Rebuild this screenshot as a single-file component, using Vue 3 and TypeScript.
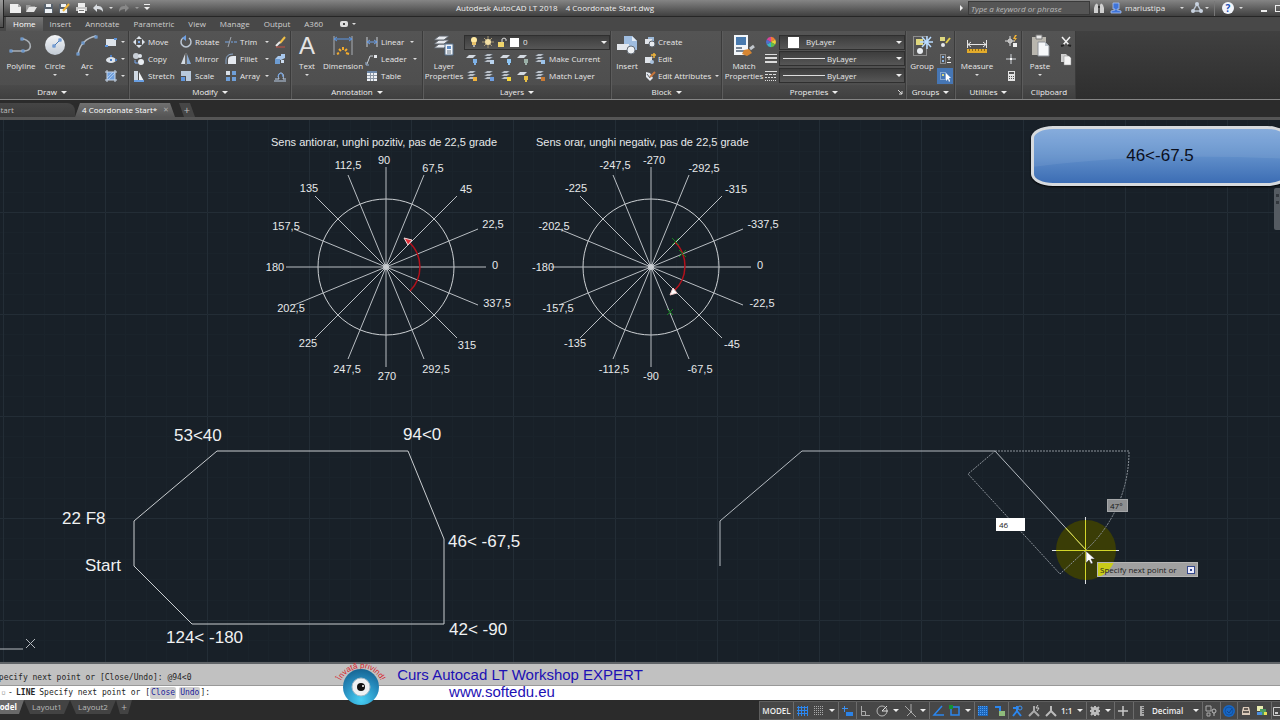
<script setup lang="ts">
import { ref } from 'vue'

interface Tool { icon: string; label: string; menu?: boolean }
interface Label { t: string; x: number; y: number }
interface StatusItem { icon?: string; text?: string; w: number; menu?: boolean; end?: boolean; name: string }

const tabs = ['Home', 'Insert', 'Annotate', 'Parametric', 'View', 'Manage', 'Output', 'A360']
const activeTab = ref('Home')
const layer = ref('0')
const color = ref('ByLayer')
const weight = ref('ByLayer')
const linetype = ref('ByLayer')
const search = ref('')
const command = ref('')
const distance = ref('46')
const angle = ref('47°')

const quick = [
  { icon: 'new', label: 'New', w: 16 }, { icon: 'open', label: 'Open', w: 17 },
  { icon: 'save', label: 'Save', w: 16 }, { icon: 'saveas', label: 'Save As', w: 17 },
  { icon: 'print', label: 'Plot', w: 17 }, { icon: 'undo', label: 'Undo', w: 16 },
]

const modify: Tool[] = [
  { icon: 'move', label: 'Move' }, { icon: 'rotate', label: 'Rotate' }, { icon: 'trim', label: 'Trim', menu: true }, { icon: 'erase', label: '' },
  { icon: 'copy', label: 'Copy' }, { icon: 'mirror', label: 'Mirror' }, { icon: 'fillet', label: 'Fillet', menu: true }, { icon: 'explode', label: '' },
  { icon: 'stretch', label: 'Stretch' }, { icon: 'scale', label: 'Scale' }, { icon: 'array', label: 'Array', menu: true }, { icon: 'offset', label: '' },
]
const annotation: Tool[] = [
  { icon: 'linear', label: 'Linear', menu: true }, { icon: 'leader', label: 'Leader', menu: true }, { icon: 'table', label: 'Table' },
]
const block: Tool[] = [
  { icon: 'create', label: 'Create' }, { icon: 'edit', label: 'Edit' }, { icon: 'attr', label: 'Edit Attributes', menu: true },
]
const layerRows = [
  {
    label: 'Make Current',
    marks: [
      { c: '#7fb2e8', i: 'sheet' }, { c: '#b9d3ee', i: 'stack' }, { c: '#8ec6f5', i: 'sheet' }, { c: '#9bb0a8', i: 'sheet' }, { c: '#9cc3ea', i: 'stack' },
    ],
  },
  {
    label: 'Match Layer',
    marks: [
      { c: '#f0b23c', i: 'stack' }, { c: '#6f9ee0', i: 'stack' }, { c: '#f4d43c', i: 'stack' }, { c: '#e8bf45', i: 'sheet' }, { c: '#c87a34', i: 'stack' },
    ],
  },
]

const spokes = Array.from({ length: 16 }, (_, i) => {
  const a = (i * Math.PI) / 8
  return { x: Math.round(Math.cos(a) * 100), y: Math.round(Math.sin(a) * 100) }
})
const wheelLabels: Label[] = [
  { t: '90', x: 384, y: 164 }, { t: '112,5', x: 348, y: 169 }, { t: '67,5', x: 433, y: 172 }, { t: '135', x: 309, y: 192 },
  { t: '45', x: 466, y: 193 }, { t: '157,5', x: 286, y: 230 }, { t: '22,5', x: 493, y: 228 }, { t: '180', x: 275, y: 271 },
  { t: '0', x: 495, y: 269 }, { t: '202,5', x: 291, y: 312 }, { t: '337,5', x: 497, y: 307 }, { t: '225', x: 308, y: 347 },
  { t: '315', x: 467, y: 349 }, { t: '247,5', x: 347, y: 373 }, { t: '292,5', x: 436, y: 373 }, { t: '270', x: 387, y: 380 },
  { t: '-270', x: 654, y: 164 }, { t: '-247,5', x: 615, y: 169 }, { t: '-292,5', x: 704, y: 172 }, { t: '-225', x: 576, y: 192 },
  { t: '-315', x: 736, y: 193 }, { t: '-202,5', x: 554, y: 230 }, { t: '-337,5', x: 763, y: 228 }, { t: '-180', x: 543, y: 271 },
  { t: '0', x: 760, y: 269 }, { t: '-157,5', x: 558, y: 312 }, { t: '-22,5', x: 762, y: 307 }, { t: '-135', x: 575, y: 347 },
  { t: '-45', x: 732, y: 348 }, { t: '-112,5', x: 614, y: 373 }, { t: '-67,5', x: 700, y: 373 }, { t: '-90', x: 651, y: 380 },
]
const shapeLabels: Label[] = [
  { t: '53<40', x: 174, y: 441 }, { t: '94<0', x: 403, y: 440 }, { t: '22 F8', x: 62, y: 524 }, { t: 'Start', x: 85, y: 571 },
  { t: '46< -67,5', x: 448, y: 547 }, { t: '42< -90', x: 449, y: 635 }, { t: '124< -180', x: 166, y: 643 },
]

const status: StatusItem[] = [
  { text: 'MODEL', w: 34, end: true, name: 'Model space' },
  { icon: 's-grid', w: 17, name: 'Grid' }, { icon: 's-snap', w: 28, menu: true, end: true, name: 'Snap' },
  { icon: 's-infer', w: 18, end: true, name: 'Dynamic input' },
  { icon: 's-ortho', w: 17, name: 'Ortho' }, { icon: 's-polar', w: 28, menu: true, name: 'Polar tracking' },
  { icon: 's-iso', w: 28, menu: true, end: true, name: 'Isometric drafting' },
  { icon: 's-track', w: 17, name: 'Object snap tracking' }, { icon: 's-osnap', w: 28, menu: true, end: true, name: 'Object snap' },
  { icon: 's-hatch', w: 17, name: 'Transparency' }, { icon: 's-cycle', w: 17, end: true, name: 'Selection cycling' },
  { icon: 's-person', w: 17, name: 'Annotation visibility' }, { icon: 's-person2', w: 17, name: 'Auto scale' },
  { icon: 's-person3', text: '1:1', w: 44, menu: true, end: true, name: 'Annotation scale' },
  { icon: 's-gear', w: 28, menu: true, end: true, name: 'Workspace' },
  { icon: 's-plus', w: 19, end: true, name: 'Annotation monitor' },
  { icon: 's-unit', text: 'Decimal', w: 69, menu: true, end: true, name: 'Units' },
  { icon: 's-props', w: 18, end: true, name: 'Quick properties' },
  { icon: 's-perf', w: 17, end: true, name: 'Graphics performance' },
  { icon: 's-plot', w: 16, name: 'Plot' }, { icon: 's-msg', w: 18, end: true, name: 'Notifications' },
  { icon: 's-clean', w: 8, name: 'Clean screen' },
]
</script>

<template>
  <svg class="defs" aria-hidden="true">
    <defs>
      <linearGradient id="ball" x1="0" y1="0" x2="0" y2="1"><stop offset="0" stop-color="#f4f6f8" /><stop offset="1" stop-color="#c2cad4" /></linearGradient>
      <radialGradient id="eye" cx=".5" cy=".85" r=".9"><stop offset="0" stop-color="#48d0f4" /><stop offset=".6" stop-color="#2589bb" /><stop offset="1" stop-color="#145f8c" /></radialGradient>
    </defs>
    <symbol id="new" viewBox="0 0 16 16"><path d="M3 4h8l3 3v6H3z" fill="#eee" /><path d="M11 4v3h3" fill="#aaa" /></symbol>
    <symbol id="open" viewBox="0 0 16 16"><path d="M3 12V5h4l1 1h4v2" fill="#999" /><path d="M3 12l3-5h8l-3 5z" fill="#e3e3e3" /></symbol>
    <symbol id="save" viewBox="0 0 16 16"><path d="M4 4h9v9H4z" fill="#59636e" /><path d="M6 4h5v3H6zM5 9h7v4H5z" fill="#eef2f6" /></symbol>
    <symbol id="saveas" viewBox="0 0 16 16"><path d="M3 4h9v9H3z" fill="#59636e" /><path d="M5 4h5v3H5zM4 9h7v4H4z" fill="#eef2f6" /><path d="M7 11l6-7" stroke="#eeb43a" stroke-width="2" /></symbol>
    <symbol id="print" viewBox="0 0 16 16"><path d="M5 3h7v4H5z" fill="#eee" /><path d="M3 7h11v4H3z" fill="#c9c9c9" /><path d="M5 9h7v4H5z" fill="#f5f5f5" /><path d="M6 10.500h5" stroke="#777" /></symbol>
    <symbol id="undo" viewBox="0 0 16 16"><path d="M7 4v2c4 0 6 1 6 6-1-2-3-3-6-3v3L3 8z" fill="#d9dde2" /></symbol>
    <symbol id="redo" viewBox="0 0 16 16"><path d="M9 4v2C5 6 3 7 3 12c1-2 3-3 6-3v3l4-4z" fill="#888" /></symbol>

    <symbol id="polyline" viewBox="0 0 24 24"><path d="M2 17h13c6 0 7-4 6-7s-5-5-8-5" fill="none" stroke="#aab0b6" stroke-width="1.500" /><g fill="#314a6c" stroke="#7fb0ea"><rect x="1" y="16" width="2" height="2" /><rect x="13" y="16" width="2" height="2" /><rect x="12" y="4" width="2" height="2" /></g></symbol>
    <symbol id="circle" viewBox="0 0 24 24"><circle cx="12" cy="11" r="10" fill="url(#ball)" /><path d="M11 12l6-6" stroke="#4b7ab4" /><g fill="#e8eef6" stroke="#4a80c8"><rect x="10" y="11" width="2" height="2" /><rect x="16" y="5" width="2" height="2" /></g></symbol>
    <symbol id="arc" viewBox="0 0 24 24"><path d="M3 21C4 11 11 4 21 2" fill="none" stroke="#b7bcc2" stroke-width="1.500" /><g fill="#314a6c" stroke="#7fb0ea"><rect x="2" y="19" width="2" height="2" /><rect x="7" y="8" width="2" height="2" /><rect x="20" y="2" width="2" height="2" /></g></symbol>
    <symbol id="rect" viewBox="0 0 16 16"><path d="M3 5h10v7H3z" fill="#dde3ea" /><path d="M2 11h3v2H2zM11 4h3v2h-3z" fill="#5c92d8" /></symbol>
    <symbol id="ellipse" viewBox="0 0 16 16"><ellipse cx="8" cy="9" rx="5" ry="3" fill="#dde3ea" /><path d="M7 4h2v2H7zM7 8h2v2H7zM12 8h2v2h-2z" fill="#4f7fc2" /></symbol>
    <symbol id="hatch" viewBox="0 0 16 16"><path d="M4 4h8v8H4z" fill="#6f9fdc" /><path d="M4 10l6-6M5 12l7-7" stroke="#a9c6ec" /><path d="M2 4h12M2 12h12M4 2v12M12 2v12" stroke="#c8d8ec" /></symbol>
    <symbol id="move" viewBox="0 0 16 16"><path d="M8 2l3 3H5zM8 14l3-3H5zM2 8l3-3v6zM14 8l-3-3v6z" fill="#dfe5ec" /><path d="M7 7h2v2H7z" fill="#7da9e8" /></symbol>
    <symbol id="copy" viewBox="0 0 16 16"><circle cx="5" cy="5" r="3" fill="#c8ced6" /><circle cx="9" cy="5" r="2" fill="#dfe5ec" /><circle cx="10" cy="11" r="3" fill="#e9edf2" /><path d="M4 9v3h3" fill="none" stroke="#7aaaf0" /></symbol>
    <symbol id="stretch" viewBox="0 0 16 16"><path d="M3 3h4v10H3z" fill="#cfd8e2" /><path d="M8 4l5 9H8z" fill="#f0f3f6" /><path d="M3 13h10" stroke="#6a9fe2" stroke-width="2" /></symbol>
    <symbol id="rotate" viewBox="0 0 16 16"><path d="M5 4a5 5 0 1 0 6 0" fill="none" stroke="#bcc7d4" stroke-width="1.500" /><path d="M8 1v6L4 4z" fill="#6f9fe0" /></symbol>
    <symbol id="mirror" viewBox="0 0 16 16"><path d="M7 3v10H3z" fill="#d3dae2" /><path d="M9 3v10h4z" fill="#87a9d2" /><path d="M8 2v12" stroke="#888" /></symbol>
    <symbol id="scale" viewBox="0 0 16 16"><path d="M3 3h10v10H8V8H3z" fill="#b8c9dc" /><path d="M3 9h4v4H3z" fill="#5f96de" /></symbol>
    <symbol id="trim" viewBox="0 0 16 16"><path d="M2 8h4M8 8h2M11 8h3" stroke="#78a8e8" /><path d="M8 3L5 13" stroke="#a2a8b0" /></symbol>
    <symbol id="fillet" viewBox="0 0 16 16"><path d="M5 13V9q0-4 5-4h3v8z" fill="#e4e8ee" /><path d="M3 13V9q0-6 7-6" fill="none" stroke="#8aa7ca" /></symbol>
    <symbol id="array" viewBox="0 0 16 16"><path d="M3 3h4v4H3z" fill="#d9e0e8" /><path d="M9 3h4v4H9zM3 9h4v4H3zM9 9h4v4H9z" fill="#6f9fd8" /></symbol>
    <symbol id="erase" viewBox="0 0 16 16"><path d="M13 3L8 9" stroke="#f0bf46" stroke-width="2" /><path d="M8 8L4 12" stroke="#e8e8e8" stroke-width="2" /><path d="M4 13h9" stroke="#c75042" /></symbol>
    <symbol id="explode" viewBox="0 0 16 16"><path d="M3 8l3-3h3v4zM9 3h4v4l-4 2z" fill="#a9c8ec" /><path d="M3 8h5v5H3z" fill="#6d9cd2" /><path d="M9 9h3v3H9z" fill="#cddcee" /></symbol>
    <symbol id="offset" viewBox="0 0 16 16"><path d="M2 13h12M3 11h4c-3-8 7-8 4 0h3" fill="none" stroke="#b9cde6" /><path d="M6 9a2 3 0 0 1 5 0" fill="none" stroke="#6ea4ea" /></symbol>
    <symbol id="dim" viewBox="0 0 24 24"><path d="M3 2v19M21 2v19" stroke="#a9aeb4" /><path d="M3 5h18M6 3L3 5l3 2M18 3l3 2-3 2" fill="none" stroke="#5f98e4" /><path d="M6 20l2-1M8 15l2 2M12 13v3M16 15l-2 2M18 20l-3-1" stroke="#f2ab2d" stroke-width="2" /></symbol>
    <symbol id="linear" viewBox="0 0 16 16"><path d="M3 3v10M13 3v10" stroke="#c9ced4" /><path d="M3 8h10M6 6L3 8l3 2M10 6l3 2-3 2" fill="none" stroke="#6ea0e6" /></symbol>
    <symbol id="leader" viewBox="0 0 16 16"><path d="M3 13l3-8h3" fill="none" stroke="#c9ced4" /><path d="M2 11v3h3" fill="none" stroke="#9bb6d8" /><path d="M10 4h3v3h-3z" fill="#e5e8ec" /></symbol>
    <symbol id="table" viewBox="0 0 16 16"><path d="M3 3h10v10H3z" fill="#edf0f4" /><path d="M3 3h10v2H3z" fill="#6d87a8" /><path d="M3 7.500h10M3 10.500h10M6.500 5v8M9.500 5v8" stroke="#8b96a4" /></symbol>
    <symbol id="layers" viewBox="0 0 24 24"><g fill="#e6e9ee" stroke="#5a6068"><path d="M2 14l5-4h10l-5 4z" /><path d="M2 10l5-4h10l-5 4z" /><path d="M2 6l5-4h10l-5 4z" /></g><path d="M13 10h8v11h-8z" fill="#f2f5f9" stroke="#57708c" /><path d="M15 12h4v3h-4z" fill="#5f8cc4" /><path d="M15 17h4M15 19h4" stroke="#697684" /></symbol>
    <symbol id="stack" viewBox="0 0 16 16"><path d="M3 11l3-2h6l-3 2zM3 8l3-2h6l-3 2zM3 5l3-2h6L9 5z" fill="#dfe4ea" stroke="#4b5560" stroke-width=".5" /><path d="M9 9h4v4H9z" fill="currentColor" /></symbol>
    <symbol id="sheet" viewBox="0 0 16 16"><path d="M2 7l3-3h7l-3 3z" fill="#d3d9e1" /><path d="M9 8h4v4H9zM10 12h2v2h-2z" fill="currentColor" /></symbol>
    <symbol id="bulb" viewBox="0 0 12 12"><circle cx="6" cy="4" r="3" fill="#ffe9a0" /><path d="M4 6h4v3H4z" fill="#e9c26a" /><path d="M5 9h2v2H5z" fill="#aaa" /></symbol>
    <symbol id="sun" viewBox="0 0 12 12"><path d="M6 0v12M0 6h12M2 2l8 8M10 2l-8 8" stroke="#a59673" /><circle cx="6" cy="6" r="3" fill="#f3dfa4" /></symbol>
    <symbol id="lock" viewBox="0 0 12 12"><path d="M6 6V3q2-2 4 0v2" fill="none" stroke="#ddd" /><path d="M2 6h6v5H2z" fill="#f0d56c" /></symbol>
    <symbol id="insert" viewBox="0 0 24 24"><path d="M9 2h8l5 5v9H9z" fill="#9fbde0" /><path d="M17 2v5h5" fill="#e2ecf7" /><path d="M2 10h12v6H2z" fill="#e3e7ec" /><circle cx="16" cy="16" r="4" fill="#eef1f4" stroke="#656d77" /></symbol>
    <symbol id="create" viewBox="0 0 16 16"><path d="M6 3h6v7H6z" fill="#9cb9d8" /><path d="M3 5h7v5H3z" fill="#e0e4ea" /><circle cx="10" cy="10" r="3" fill="#e8ebf0" stroke="#5b636d" /></symbol>
    <symbol id="edit" viewBox="0 0 16 16"><path d="M3 6h7v6H3z" fill="#dfe4ea" /><circle cx="10" cy="11" r="2" fill="#a9c2de" /><path d="M8 8l2-2" stroke="#ddd" stroke-width="2" /><path d="M12 2v5M9 4h5" stroke="#efb43a" stroke-width="1.500" /></symbol>
    <symbol id="attr" viewBox="0 0 16 16"><path d="M4 4l4 1 3 5-3 3-4-4z" fill="#e4e8ee" /><path d="M5 6l3 4" stroke="#5b636d" /><path d="M8 9l5-5" fill="none" stroke="#c8753a" stroke-width="2" /></symbol>
    <symbol id="match" viewBox="0 0 24 24"><path d="M2 1h14v20H2z" fill="#f3f6f9" /><path d="M4 3h10v8H4z" fill="#497aae" /><path d="M4 14h6M4 17h8" stroke="#788594" stroke-width="2" /><path d="M12 16l5-1 3 4-5 3-5-2z" fill="#d58532" /><path d="M18 15l4-3" stroke="#c2c7cd" stroke-width="3" /></symbol>
    <symbol id="wheel" viewBox="0 0 14 14"><path d="M7 7V1a6 6 0 0 1 5 3z" fill="#ef7d37" /><path d="M7 7l5-3a6 6 0 0 1 0 6z" fill="#e9d33a" /><path d="M7 7l5 3a6 6 0 0 1-5 3z" fill="#62bf4a" /><path d="M7 7v6a6 6 0 0 1-5-3z" fill="#3db2c4" /><path d="M7 7l-5 3a6 6 0 0 1 0-6z" fill="#506fd0" /><path d="M7 7L2 4a6 6 0 0 1 5-3z" fill="#d5459a" /></symbol>
    <symbol id="weights" viewBox="0 0 12 12"><path d="M0 1.500h12" stroke="#dcdcdc" /><path d="M0 5h12M0 9h12" stroke="#dcdcdc" stroke-width="2" /></symbol>
    <symbol id="types" viewBox="0 0 12 12"><path d="M0 1.500h12" stroke="#ddd" /><path d="M0 4.500h12" stroke="#ddd" stroke-dasharray="3 1" /><path d="M0 7.500h12" stroke="#ddd" stroke-dasharray="2 1" /><path d="M0 10.500h12" stroke="#ddd" stroke-dasharray="1 1" /></symbol>
    <symbol id="group" viewBox="0 0 24 24"><path d="M3.500 2.500h13v19h-13z" fill="none" stroke="#c9c9c9" stroke-dasharray="1 1" /><path d="M6 5h7v6H6z" fill="#ded77e" /><circle cx="10" cy="17" r="3" fill="#e9edf1" /><path d="M17 2v13M10 8h13M12 3l9 10M21 3l-9 10" stroke="#b9dcff" stroke-width="1.500" /></symbol>
    <symbol id="ungroup" viewBox="0 0 16 16"><path d="M3 3h5v4H3z" fill="#ddd77e" /><circle cx="6" cy="11" r="2" fill="#e6e9ed" /><path d="M9 9l4-5" stroke="#e3cd4a" stroke-width="2" /></symbol>
    <symbol id="groupedit" viewBox="0 0 16 16"><path d="M3.500 3.500h5v9h-5z" fill="none" stroke="#c9c9c9" stroke-dasharray="1 1" /><path d="M5 5h2v2H5zM5 9h2v2H5z" fill="#8eb8e8" /><path d="M10 6.500h4M12 5v4M10 11.500h4" stroke="#eee" /></symbol>
    <symbol id="groupsel" viewBox="0 0 16 16"><path d="M3.500 4.500h5v7h-5z" fill="none" stroke="#c6d8f0" stroke-dasharray="1 1" /><path d="M5 6h2v2H5z" fill="#d9d67c" /><path d="M9 5v8l2-2 1 3 1-1-1-3h2z" fill="#fff" /></symbol>
    <symbol id="measure" viewBox="0 0 24 24"><path d="M2.500 6v8M21.500 6v8" stroke="#e5e5e5" /><path d="M3 10.500h18M6 8l-3 2.500 3 2.500M18 8l3 2.500-3 2.500" fill="none" stroke="#e5e5e5" /><path d="M2 15h20v4H2z" fill="#e3ab2b" /><path d="M4.500 15v2M7.500 15v2M10.500 15v2M13.500 15v2M16.500 15v2M19.500 15v2" stroke="#8f6a17" /></symbol>
    <symbol id="qselect" viewBox="0 0 16 16"><circle cx="7" cy="7" r="2" fill="none" stroke="#ddd" /><path d="M7 2v10M2 7h10" stroke="#ddd" /><path d="M12 1l-2 4h2l-1 3 3-4h-2l2-3z" fill="#f2b336" /><path d="M10 9h4v4h-4z" fill="#eee" /></symbol>
    <symbol id="point" viewBox="0 0 16 16"><path d="M8 3v10M3 8h10" stroke="#cfd3d8" /><path d="M7 7h2v2H7z" fill="#fff" /></symbol>
    <symbol id="calc" viewBox="0 0 16 16"><path d="M5 3h7v10H5z" fill="#e2e2e2" /><path d="M6 4h5v2H6zM6 8h1v1H6zM8 8h1v1H8zM10 8h1v1h-1zM6 10h1v1H6zM8 10h1v1H8zM10 10h1v1h-1z" fill="#555" /></symbol>
    <symbol id="paste" viewBox="0 0 24 24"><path d="M4 3h14v18H4z" fill="#b9b6ae" /><path d="M8 1h6v4H8z" fill="#e9e9e9" stroke="#777" /><path d="M10 8h7l4 4v10H10z" fill="#f6f8fa" stroke="#8b9097" /><path d="M17 8v4h4z" fill="#bcc4cc" /></symbol>
    <symbol id="cut" viewBox="0 0 16 16"><path d="M4 3l7 8M12 3l-7 8" stroke="#f2f2f2" stroke-width="1.500" /><path d="M3 12l3-1M13 12l-3-1" stroke="#222" stroke-width="2" /></symbol>
    <symbol id="copyclip" viewBox="0 0 16 16"><path d="M3 3h5l2 2v6H3z" fill="#cfcfcf" /><path d="M6 5h5l2 2v7H6z" fill="#f5f5f5" stroke="#888" stroke-width=".5" /></symbol>

    <symbol id="s-grid" viewBox="0 0 16 16"><path d="M3 4.500h11M3 7.500h11M3 10.500h11M4.500 3v10M7.500 3v10M10.500 3v10M13.500 3v10" stroke="#2b86ee" /></symbol>
    <symbol id="s-snap" viewBox="0 0 16 16"><path d="M3 3.500h10M3 5.500h10M3 7.500h10M3 9.500h10M3 11.500h10" stroke="#aaa" stroke-dasharray="1 1" /></symbol>
    <symbol id="s-infer" viewBox="0 0 16 16"><path d="M5.500 3v6M3 5.500h6" stroke="#3a90f2" /><path d="M7 9h7v4H7z" fill="#2b82e6" /></symbol>
    <symbol id="s-ortho" viewBox="0 0 16 16"><path d="M4.500 3v9.500H13M4.500 8.500h4v4" fill="none" stroke="#aaa" /></symbol>
    <symbol id="s-polar" viewBox="0 0 16 16"><circle cx="8" cy="8" r="5" fill="none" stroke="#b5b5b5" /><path d="M8 8l5-5M8 8h6" stroke="#ddd" /></symbol>
    <symbol id="s-iso" viewBox="0 0 16 16"><path d="M3 3l11 11M9 1v7M5 13l5-5" stroke="#aaa" /></symbol>
    <symbol id="s-track" viewBox="0 0 16 16"><path d="M12 3L4 12h10" fill="none" stroke="#2b86ee" stroke-width="1.500" /></symbol>
    <symbol id="s-osnap" viewBox="0 0 16 16"><path d="M4 4h8v8H4z" fill="none" stroke="#2b86ee" stroke-width="1.500" /><path d="M2 2h4v4H2z" fill="#169431" /></symbol>
    <symbol id="s-hatch" viewBox="0 0 16 16"><path d="M3 3h10v10H3z" fill="#1d66ba" /><path d="M3 3.500h10M3 5.500h10M3 7.500h10M3 9.500h10M3 11.500h10" stroke="#4d9df2" stroke-dasharray="1 1" /></symbol>
    <symbol id="s-cycle" viewBox="0 0 16 16"><path d="M3 4h5v4" fill="none" stroke="#2b86ee" stroke-width="2" /><path d="M7 8h6v5H7z" fill="#8fbb7c" /></symbol>
    <symbol id="s-person" viewBox="0 0 16 16"><path d="M8 3v6M8 8l-4 5M8 8l4 5M4 5h5" stroke="#2b86ee" stroke-width="2" fill="none" /><circle cx="11" cy="5" r="2" fill="none" stroke="#3b93f5" /></symbol>
    <symbol id="s-person2" viewBox="0 0 16 16"><path d="M8 3v6M8 8l-5 5M8 8l5 5" stroke="#aaa" stroke-width="2" fill="none" /><path d="M12 2l-2 3h3l-2 3" stroke="#ccc" fill="none" /></symbol>
    <symbol id="s-person3" viewBox="0 0 16 16"><path d="M8 3v6M8 8l-5 5M8 8l5 5" stroke="#bbb" stroke-width="2" fill="none" /></symbol>
    <symbol id="s-gear" viewBox="0 0 16 16"><path d="M8 3v10M3 8h10M4 4l8 8M12 4l-8 8" stroke="#bdbdbd" stroke-width="2" /><circle cx="8" cy="8" r="4" fill="#bdbdbd" /><circle cx="8" cy="8" r="1" fill="#474747" /></symbol>
    <symbol id="s-plus" viewBox="0 0 16 16"><path d="M8 3v10M3 8h10" stroke="#c9c9c9" stroke-width="1.500" /></symbol>
    <symbol id="s-unit" viewBox="0 0 16 16"><path d="M6 3h4v10H6z" fill="#aaa" /><path d="M8 4.500h2M8 6.500h2M8 8.500h2M8 10.500h2" stroke="#555" /></symbol>
    <symbol id="s-props" viewBox="0 0 16 16"><path d="M3 3h5v5H3zM4 10h3v3H4z" fill="none" stroke="#aaa" /><circle cx="11" cy="8" r="2" fill="none" stroke="#bbb" /><path d="M11 10v3" stroke="#bbb" /></symbol>
    <symbol id="s-perf" viewBox="0 0 16 16"><circle cx="8" cy="8" r="6" fill="#1766c4" /><circle cx="8" cy="8" r="4" fill="none" stroke="#12529f" /><path d="M6 8l2 2 3-4" fill="none" stroke="#12458a" /></symbol>
    <symbol id="s-plot" viewBox="0 0 16 16"><path d="M4 8l1-4h6l1 4v4H4z" fill="#d9c9b9" /><path d="M5 9h6M6 6h4" stroke="#3f3a36" stroke-width="1.500" /></symbol>
    <symbol id="s-msg" viewBox="0 0 16 16"><path d="M3 3h6v5H3z" fill="#e9edb0" /><path d="M6 6h6v6H6z" fill="#4c9b60" /><path d="M3 9h5v3H3z" fill="#4b8fe0" /><path d="M10 9h3v3h-3z" fill="#e8df53" /></symbol>
    <symbol id="s-clean" viewBox="0 0 16 16"><path d="M1.500 4.500h14v8h-14z" fill="none" stroke="#ccc" /><path d="M3 9h3v2H3z" fill="#ccc" /></symbol>
  </svg>

  <div class="app">
    <header class="titlebar">
      <nav class="quick" aria-label="Quick access">
        <button v-for="q in quick" :key="q.icon" :aria-label="q.label" :style="{ width: q.w + 'px' }"><svg class="ic"><use :href="'#' + q.icon" /></svg></button>
        <i class="caret" />
        <button class="redo" aria-label="Redo"><svg class="ic"><use href="#redo" /></svg></button>
        <i class="caret dim" />
        <i class="caret big top" />
      </nav>
      <h1><span>Autodesk AutoCAD LT 2018</span><span>4 Coordonate Start.dwg</span></h1>
      <div class="account">
        <i class="play" />
        <input v-model="search" class="search" aria-label="Search" placeholder="Type a keyword or phrase" />
        <svg class="ic bino" viewBox="0 0 16 16"><path d="M4 5q2-3 3 0v8H3V8zM12 5q-2-3-3 0v8h4V8z" fill="#cfcfcf" /><path d="M7 7h2" stroke="#333" stroke-width="2" /></svg>
        <button class="user"><svg class="ic" viewBox="0 0 16 16"><path d="M5 3h6v6H9v1l4 1v2H3v-2l4-1V9H5z" fill="#3f74d8" stroke="#a8c2f4" stroke-width=".8" /></svg>mariustipa</button>
        <i class="caret" />
        <button class="share" aria-label="Autodesk App Store"><svg class="ic" viewBox="0 0 16 16"><path d="M8 4L4 11h8z" fill="none" stroke="#b9c3d0" stroke-width="1.500" /><g fill="#c9d3e0"><circle cx="8" cy="4" r="2" /><circle cx="4" cy="11" r="2" /><circle cx="12" cy="11" r="2" /></g></svg></button>
        <i class="caret" />
        <button class="help" aria-label="Help"><span>?</span></button>
        <i class="caret" />
        <button class="min" aria-label="Minimize"><i /></button>
        <button class="max" aria-label="Restore"><i /></button>
      </div>
    </header>
    <div class="appbtn" />

    <nav class="tabs">
      <button v-for="t in tabs" :key="t" :class="{ active: t === activeTab }" @click="activeTab = t">{{ t }}</button>
      <button class="cloud" aria-label="Ribbon display"><i /></button><i class="caret" />
    </nav>

    <section class="ribbon">
      <div class="panel draw">
        <div class="body">
          <button class="big w34"><svg class="bi"><use href="#polyline" /></svg>Polyline</button>
          <button class="big w34"><svg class="bi"><use href="#circle" /></svg>Circle<i class="caret" /></button>
          <button class="big w30"><svg class="bi"><use href="#arc" /></svg>Arc<i class="caret" /></button>
          <div class="rows">
            <button v-for="n in ['rect', 'ellipse', 'hatch']" :key="n" class="tool" :aria-label="n"><svg class="ic"><use :href="'#' + n" /></svg><i class="caret" /></button>
          </div>
        </div>
        <h2>Draw<i class="caret big" /></h2>
      </div>

      <div class="panel modify">
        <div class="body grid4">
          <button v-for="m in modify" :key="m.icon" class="tool" :aria-label="m.label || m.icon"><svg class="ic"><use :href="'#' + m.icon" /></svg>{{ m.label }}<i v-if="m.menu" class="caret" /></button>
        </div>
        <h2>Modify<i class="caret big" /></h2>
      </div>

      <div class="panel annotation">
        <div class="body">
          <button class="big w30"><span class="glyph">A</span>Text<i class="caret" /></button>
          <button class="big w44"><svg class="bi"><use href="#dim" /></svg>Dimension</button>
          <div class="rows">
            <button v-for="m in annotation" :key="m.icon" class="tool"><svg class="ic"><use :href="'#' + m.icon" /></svg>{{ m.label }}<i v-if="m.menu" class="caret" /></button>
          </div>
        </div>
        <h2>Annotation<i class="caret big" /></h2>
      </div>

      <div class="panel layers">
        <div class="body">
          <button class="big w40"><svg class="bi"><use href="#layers" /></svg>Layer Properties</button>
          <div class="rows grow">
            <label class="combo"><svg class="mi"><use href="#bulb" /></svg><svg class="mi"><use href="#sun" /></svg><svg class="mi"><use href="#lock" /></svg><i class="swatch" /><select v-model="layer" aria-label="Layer"><option>0</option></select><i class="caret big" /></label>
            <div v-for="r in layerRows" :key="r.label" class="tools">
              <button v-for="(m, i) in r.marks" :key="i" class="mini" :aria-label="r.label + ' option ' + (i + 1)" :style="{ color: m.c }"><svg class="ic"><use :href="'#' + m.i" /></svg></button>
              <button class="tool">{{ r.label }}</button>
            </div>
          </div>
        </div>
        <h2>Layers<i class="caret big" /></h2>
      </div>

      <div class="panel block">
        <div class="body">
          <button class="big w30"><svg class="bi"><use href="#insert" /></svg>Insert</button>
          <div class="rows grow">
            <button v-for="m in block" :key="m.icon" class="tool"><svg class="ic"><use :href="'#' + m.icon" /></svg>{{ m.label }}<i v-if="m.menu" class="caret" /></button>
          </div>
        </div>
        <h2>Block<i class="caret big" /></h2>
      </div>

      <div class="panel properties">
        <div class="body">
          <button class="big w44"><svg class="bi"><use href="#match" /></svg>Match Properties</button>
          <div class="rows grow">
            <div class="prop"><svg class="pi"><use href="#wheel" /></svg><label class="combo"><i class="swatch wide" /><select v-model="color" aria-label="Object color"><option>ByLayer</option></select><i class="caret big" /></label></div>
            <div class="prop"><svg class="pi"><use href="#weights" /></svg><label class="combo"><i class="rule" /><select v-model="weight" aria-label="Lineweight"><option>ByLayer</option></select><i class="caret big" /></label></div>
            <div class="prop"><svg class="pi"><use href="#types" /></svg><label class="combo"><i class="rule" /><select v-model="linetype" aria-label="Linetype"><option>ByLayer</option></select><i class="caret big" /></label></div>
          </div>
        </div>
        <h2>Properties<i class="caret big" /><svg class="launch" viewBox="0 0 6 6"><path d="M1 1l4 4M5 2v3H2" stroke="#ddd" fill="none" /></svg></h2>
      </div>

      <div class="panel groups">
        <div class="body">
          <button class="big w30"><svg class="bi"><use href="#group" /></svg>Group</button>
          <div class="rows">
            <button class="tool" aria-label="Ungroup"><svg class="ic"><use href="#ungroup" /></svg></button>
            <button class="tool" aria-label="Group edit"><svg class="ic"><use href="#groupedit" /></svg></button>
            <button class="tool on" aria-label="Group selection"><svg class="ic"><use href="#groupsel" /></svg></button>
          </div>
        </div>
        <h2>Groups<i class="caret big" /></h2>
      </div>

      <div class="panel utilities">
        <div class="body">
          <button class="big w44"><svg class="bi"><use href="#measure" /></svg>Measure<i class="caret" /></button>
          <div class="rows">
            <button v-for="n in ['qselect', 'point', 'calc']" :key="n" class="tool" :aria-label="n"><svg class="ic"><use :href="'#' + n" /></svg></button>
          </div>
        </div>
        <h2>Utilities<i class="caret big" /></h2>
      </div>

      <div class="panel clipboard">
        <div class="body">
          <button class="big w34"><svg class="bi"><use href="#paste" /></svg>Paste<i class="caret" /></button>
          <div class="rows">
            <button v-for="n in ['cut', 'copyclip']" :key="n" class="tool" :aria-label="n"><svg class="ic"><use :href="'#' + n" /></svg></button>
          </div>
        </div>
        <h2>Clipboard</h2>
      </div>
    </section>

    <nav class="files">
      <button class="file start">Start</button>
      <button class="file current">4 Coordonate Start*<span class="x">✕</span></button>
      <button class="file add" aria-label="New drawing">+</button>
    </nav>

    <main class="canvas">
      <svg class="drawing">
        <defs>
          <pattern id="grid" x="3" y="92" width="102" height="102" patternUnits="userSpaceOnUse">
            <path d="M20 0v102M41 0v102M61 0v102M82 0v102M0 20h102M0 41h102M0 61h102M0 82h102" stroke="#1a232b" transform="translate(.5 .5)" />
            <path d="M0 0v102M0 0h102" stroke="#232d36" transform="translate(.5 .5)" />
          </pattern>
          <clipPath id="halo"><circle cx="1086" cy="550" r="30" /></clipPath>
        </defs>
        <rect width="100%" height="100%" fill="url(#grid)" />
        <g transform="translate(0 -120)">
          <g v-for="cx in [386, 651]" :key="cx" :transform="`translate(${cx} 267)`" fill="none" stroke="#b9bec3">
            <circle r="68" stroke="#cdd1d4" />
            <line v-for="(s, i) in spokes" :key="i" x1="0" y1="0" :x2="s.x" :y2="s.y" />
            <circle r="3" fill="#c9cdd1" stroke="none" />
          </g>
          <path d="M410 291A34 34 0 0 0 410 243" fill="none" stroke="#b3111c" stroke-width="1.500" />
          <path d="M404 238l8 2-4 5z" fill="#e0303a" stroke="#f3dada" />
          <path d="M675 242A34 34 0 0 1 674 291" fill="none" stroke="#b3111c" stroke-width="1.500" />
          <path d="M670 295l3-7 4 5z" fill="#fff" stroke="#f2c9c9" />
          <path d="M672 238l7 7M672 245l7-7M679 250l7 7M679 257l7-7M667 309l6 6M667 315l6-6" stroke="#15801f" />
          <g class="note">
            <text x="271" y="146">Sens antiorar, unghi pozitiv, pas de 22,5 grade</text>
            <text x="536" y="146">Sens orar, unghi negativ, pas de 22,5 grade</text>
            <text v-for="(l, i) in wheelLabels" :key="i" :x="l.x" :y="l.y" text-anchor="middle">{{ l.t }}</text>
          </g>
          <path d="M134 566V521L217 451H408L444 539V624H192z" fill="none" stroke="#c9cdd0" />
          <g class="cote"><text v-for="l in shapeLabels" :key="l.t" :x="l.x" :y="l.y">{{ l.t }}</text></g>
          <path d="M0 649h23M26 639l9 9M35 639l-9 9" stroke="#b4b9be" />
          <circle cx="1086" cy="550" r="30" fill="#3a3d06" />
          <path d="M720 566V521L802 451H995L1086 550" fill="none" stroke="#b4bac0" />
          <path d="M995 451H1129A134 134 0 0 1 1086 550L1060 574 968 474z" fill="none" stroke="#8d949b" stroke-dasharray="2 1" />
          <path d="M1052 550.500h67M1085.500 517v67" stroke="#dfe2e4" />
          <g clip-path="url(#halo)" stroke="#d3d72a"><path d="M995 451L1086 550M1052 550.500h67M1085.500 517v67" /></g>
          <path d="M1086 551v12l3-3 2 4 2-1-2-4h4z" fill="#fff" stroke="#222" stroke-width=".5" />
        </g>
      </svg>
      <input v-model="distance" class="dyn dist" aria-label="Distance" />
      <input v-model="angle" class="dyn ang" aria-label="Angle" />
      <div class="tip">Specify next point or<button aria-label="Options"><i /></button></div>
      <div class="callout">
        <svg viewBox="0 0 258 60" preserveAspectRatio="none"><path d="M0 42Q110 26 258 33V0H0z" fill="#fff" opacity=".07" /></svg>
        <span>46&lt;-67.5</span>
      </div>
      <div class="handle"><i /><i /></div>
    </main>

    <section class="command">
      <p class="history">Specify next point or [Close/Undo]: @94&lt;0</p>
      <div class="prompt"><span class="pm">▫</span><span class="pm">-</span><b>LINE</b><span>Specify next point or [</span><button>Close</button><button>Undo</button><span>]:</span><input v-model="command" aria-label="Command" /></div>
      <svg class="eye" viewBox="0 0 50 50">
        <path id="rim" d="M3 30A22 22 0 0 1 47 30" fill="none" />
        <text class="motto"><textPath href="#rim" startOffset="50%" text-anchor="middle">Învață privind!</textPath></text>
        <circle cx="25" cy="27" r="18" fill="url(#eye)" />
        <circle cx="25" cy="27" r="9" fill="#eef1f3" stroke="#a6bac6" />
        <circle cx="25" cy="27" r="4" fill="#111" /><circle cx="27" cy="26" r="1" fill="#fff" />
      </svg>
      <div class="course"><span>Curs Autocad LT Workshop EXPERT</span><a href="#">www.softedu.eu</a></div>
    </section>

    <footer class="statusbar">
      <nav class="layouts"><button class="lay model">Model</button><button class="lay">Layout1</button><button class="lay">Layout2</button><button class="lay plus" aria-label="New layout">+</button></nav>
      <div class="status">
        <button v-for="s in status" :key="s.name" :class="{ end: s.end }" :aria-label="s.name" :style="{ width: s.w + 'px' }"><svg v-if="s.icon" class="ic"><use :href="'#' + s.icon" /></svg><span v-if="s.text">{{ s.text }}</span><i v-if="s.menu" class="caret big" /></button>
      </div>
    </footer>
  </div>
</template>

<style>
body { background: #2b2b2b; }
</style>

<style scoped>
* { box-sizing: border-box; }
.defs { position: absolute; width: 0; height: 0; }
.app { position: relative; display: flex; flex-direction: column; min-height: 100vh; overflow: hidden; font: 8px/12px "Open Sans", "Noto Sans", sans-serif; color: #e8e8e8; background: #2b2b2b; }
button, select, input { font: inherit; color: inherit; background: none; border: 0; padding: 0; margin: 0; min-width: 0; }
button { display: flex; align-items: center; white-space: nowrap; }
h1, h2, p { margin: 0; font: inherit; }
svg { flex: none; display: block; }
.ic { width: 16px; height: 16px; }
.caret { flex: none; width: 0; height: 0; border: 2px solid transparent; border-top-color: #ddd; border-bottom: 0; }
.caret.big { border-width: 3px; border-bottom: 0; border-top-color: #eee; }
.caret.dim { border-top-color: #999; }

.titlebar { display: flex; align-items: center; height: 17px; background: linear-gradient(#858585, #5a5a5a 60%, #404040); border-bottom: 1px solid #262626; }
.quick { display: flex; align-items: center; padding-left: 7px; }
.quick button { height: 16px; }
.quick > .caret { margin-left: 3px; }
.quick .redo { margin-left: 3px; }
.quick .top { margin-left: 5px; position: relative; }
.quick .top::before { content: ""; position: absolute; left: -3px; top: -6px; width: 6px; height: 1px; background: #eee; }
h1 { flex: 1; display: flex; justify-content: center; gap: 8px; white-space: nowrap; color: #f0f0f0; }
.account { display: flex; align-items: center; height: 16px; }
.play { border: 3px solid transparent; border-left-color: #eee; border-right: 0; margin-right: 5px; }
.search { width: 122px; height: 14px; padding: 0 2px; background: #555; border: 1px solid #3a3a3a; font-style: italic; }
.search::placeholder { color: #bbb; opacity: 1; }
.user { width: 72px; gap: 1px; }
.share { margin-left: 5px; }
.share + .caret { margin-right: 5px; }
.help { border-left: 1px solid #777; padding-left: 7px; margin-right: 5px; height: 15px; }
.help span { width: 12px; height: 12px; border-radius: 6px; background: #f2f5fb; color: #1d4fb5; font-weight: 700; text-align: center; font-size: 10px; }
.min { margin-left: 18px; width: 14px; }
.min i { width: 6px; height: 2px; background: #eee; margin-top: 6px; }
.max { width: 5px; overflow: hidden; }
.max i { flex: none; width: 7px; height: 7px; border: 1px solid #eee; }
.bino { margin: 0 1px; }
.appbtn { position: absolute; left: 0; top: 0; width: 4px; height: 28px; background: linear-gradient(#9a9a9a, #4e4e4e); border: 1px solid #222; border-width: 0 1px 1px 0; }

.tabs { display: flex; align-items: stretch; height: 14px; padding-left: 6px; background: #484848; color: #cfcfcf; }
.tabs button { padding: 0 7px; }
.tabs .active { background: linear-gradient(#757575, #565656); color: #fff; }
.tabs .cloud { padding: 0; margin-left: 10px; }
.cloud i { width: 8px; height: 6px; border-radius: 2px; background: #ddd; }
.cloud i::after { content: ""; display: block; width: 2px; height: 2px; margin: 2px 3px; background: #444; }
.tabs > .caret { align-self: center; margin-left: 4px; }

.ribbon { display: flex; height: 69px; background: linear-gradient(#404040, #2e2e2e); border-bottom: 1px solid #858585; }
.panel { flex: none; display: flex; flex-direction: column; background: linear-gradient(#545454, #4d4d4d); border-right: 1px solid #3b3b3b; border-left: 1px solid #5c5c5c; }
.panel .body { display: flex; height: 54px; padding: 3px 0 1px; }
.panel h2 { position: relative; display: flex; align-items: center; justify-content: center; gap: 4px; flex: 1; background: linear-gradient(#4a4a4a, #3f3f3f); color: #eee; }
.draw { width: 154px; margin-left: -25px; }
.draw .body { padding-left: 28px; }
.modify { width: 162px; }
.annotation { width: 132px; }
.layers { width: 188px; }
.block { width: 111px; }
.properties { width: 184px; }
.groups { width: 49px; }
.utilities { width: 67px; }
.clipboard { width: 54px; }
.big { flex-direction: column; flex: none; line-height: 10px; white-space: normal; text-align: center; }
.caret.big { display: block; }
.big .caret { margin-top: 3px; }
.bi { width: 24px; height: 24px; margin-bottom: 3px; }
.glyph { height: 24px; margin-bottom: 3px; font-family: "Liberation Sans", Arial, sans-serif; font-size: 24px; line-height: 24px; color: #e4e4e4; }
.w30 { width: 30px; }
.w34 { width: 34px; }
.w40 { width: 40px; }
.w44 { width: 42px; }
.rows { display: grid; grid-template-rows: repeat(3, 1fr); align-items: center; }
.grow { flex: 1; min-width: 0; }
.tool { gap: 1px; height: 16px; }
.rows .tool .caret { margin-left: 5px; }
.draw .rows { margin-left: 1px; }
.draw .rows .tool .caret { margin-left: 1px; }
.block .rows .tool { gap: 0; }
.block .rows .tool .caret { margin-left: 4px; }
.grid4 { display: grid !important; grid-template: repeat(3, 1fr) / 47px 45px 49px 17px; align-items: center; padding-left: 1px !important; }
.grid4 .caret { margin-left: auto; margin-right: 3px; }
.combo { display: flex; align-items: center; gap: 2px; height: 15px; padding: 0 2px 0 3px; border: 1px solid #2f2f2f; background: linear-gradient(#3d3d3d, #565656); }
.combo select { flex: 1; appearance: none; margin-left: 2px; }
.combo option { color: #222; }
.mi { width: 12px; height: 12px; }
.swatch { width: 9px; height: 9px; background: #fff; }
.swatch.wide { width: 11px; height: 11px; margin: 0 3px 0 5px; }
.rule { width: 42px; height: 1px; background: #ddd; }
.rule + select { margin-left: 0; }
.tools { display: flex; }
.mini { width: 17px; }
.prop { display: grid; grid-template-columns: 14px 1fr; align-items: center; }
.prop .combo { min-width: 0; }
.pi { width: 12px; height: 12px; }
.launch { position: absolute; right: 2px; width: 6px; height: 6px; }
.on { background: #4676b4; }
.utilities .rows { margin-left: 5px; }
.clipboard .rows { margin-left: 1px; }

.files { display: flex; height: 20px; padding-top: 3px; background: #2b2b2b; border-bottom: 3px solid #555; }
.file { height: 14px; color: #bdbdbd; }
.start { width: 79px; margin-left: -4px; background: linear-gradient(#454545, #3a3a3a); border-radius: 0 8px 0 0; }
.current { width: 100px; padding-left: 7px; gap: 6px; background: linear-gradient(#707070, #555); color: #fff; clip-path: polygon(5px 0, 95px 0, 100% 100%, 0 100%); }
.x { color: #aaa; font-size: 7px; }
.add { width: 16px; margin-left: 4px; justify-content: center; background: #464646; font-size: 11px; clip-path: polygon(0 0, 11px 0, 100% 100%, 5px 100%); }

.canvas { position: relative; flex: 1; min-height: 300px; background: #182028; overflow: hidden; }
.drawing { position: absolute; inset: 0; width: 100%; height: 100%; font-family: "Liberation Sans", Arial, sans-serif; }
.note { font-size: 11px; fill: #e6e8ea; }
.cote { font-size: 17px; fill: #f0f1f2; }
.dyn { position: absolute; height: 13px; padding: 0 3px; }
.dist { left: 996px; top: 398px; width: 29px; background: #fff; color: #222; }
.ang { left: 1107px; top: 379px; width: 21px; background: #8d8f91; color: #151515; border: 1px solid #a5a7a9; padding: 0 2px; }
.tip { position: absolute; left: 1097px; top: 442px; display: flex; align-items: center; justify-content: space-between; width: 101px; height: 15px; padding: 0 2px; border: 1px solid #b5b5b5; background: radial-gradient(circle 30px at -11px -13px, #c9cc18 97%, #a0a0a0 100%); color: #1d1d1d; white-space: nowrap; }
.tip button { width: 8px; height: 8px; border: 1px solid #34488c; background: #eef; justify-content: center; }
.tip button i { width: 2px; height: 2px; background: #34488c; }
.callout { position: absolute; right: -9px; top: 6px; width: 258px; height: 60px; border: 3px solid #d6dade; border-radius: 22px / 12px; overflow: hidden; background: linear-gradient(#7da6da, #6492cc 45%, #3c6db4); box-shadow: 0 1px 2px #000; display: grid; place-items: center; color: #0b0f1c; font: 17px/20px "Liberation Sans", Arial, sans-serif; }
.callout svg { grid-area: 1 / 1; width: 100%; height: 100%; }
.callout span { grid-area: 1 / 1; }
.handle { position: absolute; right: 0; top: 68px; width: 6px; height: 42px; padding: 6px 1px; background: #555b62; border-radius: 2px 0 0 2px; display: flex; flex-direction: column; gap: 4px; align-items: flex-end; }
.handle i { width: 3px; height: 3px; background: #33383e; }

.command { position: relative; border-top: 2px solid #606468; background: #c1c1c1; color: #262626; font: 8px/12px "DejaVu Sans Mono", "Liberation Mono", monospace; }
.history { height: 21px; padding-top: 8px; margin-left: -6px; white-space: pre; }
.prompt { display: flex; align-items: center; height: 15px; background: #fff; border-top: 1px solid #999; white-space: pre; }
.prompt .pm { width: 7px; text-align: center; }
.prompt .pm:first-child { color: #888; }
.prompt b { margin: 0 4px 0 2px; }
.prompt button { background: #cfcfcf; color: #1e1e9a; border-radius: 2px; height: 12px; margin-right: 3px; padding: 0 1px; }
.prompt button + span { margin-left: -3px; }
.prompt input { flex: 1; }
.eye { position: absolute; left: 336px; top: -4px; width: 50px; height: 50px; z-index: 2; overflow: visible; }
.motto { font: 8px "Liberation Sans", Arial, sans-serif; fill: #d8232b; }
.course { position: absolute; left: 400px; top: 2px; width: 240px; display: flex; flex-direction: column; align-items: center; font: 15px/17px "Liberation Sans", Arial, sans-serif; color: #1c10b4; white-space: nowrap; }
.course a { color: inherit; text-decoration: none; margin-right: 36px; }

.statusbar { display: flex; justify-content: space-between; height: 20px; background: #2b2b2b; }
.layouts { display: flex; margin-left: -15px; height: 14px; color: #b9b9b9; }
.lay { width: 46px; justify-content: center; background: #434343; clip-path: polygon(0 0, 100% 0, 40px 100%, 6px 100%); }
.lay.model { width: 39px; background: #696969; color: #fff; font-weight: 700; clip-path: polygon(0 0, 100% 0, 34px 100%, 0 100%); }
.lay.plus { width: 16px; clip-path: polygon(0 0, 100% 0, 12px 100%, 4px 100%); font-size: 10px; }
.status { display: flex; height: 19px; margin-top: 1px; background: #474747; border: 1px solid #5e5e5e; border-right: 0; color: #eee; overflow: hidden; }
.status button { flex: none; overflow: hidden; font-weight: 600; gap: 2px; }
.status button:first-child { justify-content: center; }
.status .end { border-right: 1px solid #6b6b6b; }
.status .caret { margin-left: auto; margin-right: 3px; }
</style>
